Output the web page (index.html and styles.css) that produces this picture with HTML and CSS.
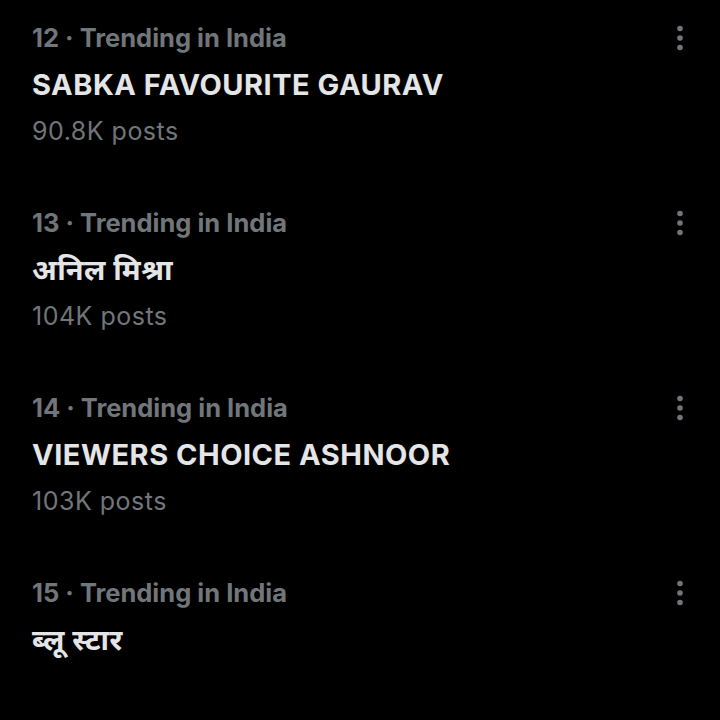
FILE: index.html
```html
<!DOCTYPE html>
<html lang="en">
<head>
<meta charset="utf-8">
<title>Trending</title>
<link rel="stylesheet" href="styles.css">
</head>
<body>
<div class="list">
  <div class="trend">
    <div class="meta">12 · Trending in India</div>
    <div class="title">SABKA FAVOURITE GAURAV</div>
    <div class="count">90.8K posts</div>
    <svg class="more" viewBox="0 0 12 30" width="12" height="30"><circle cx="6" cy="5.5" r="2.8"/><circle cx="6" cy="15" r="2.8"/><circle cx="6" cy="24.5" r="2.8"/></svg>
  </div>
  <div class="trend">
    <div class="meta">13 · Trending in India</div>
    <div class="title">अनिल मिश्रा</div>
    <div class="count">104K posts</div>
    <svg class="more" viewBox="0 0 12 30" width="12" height="30"><circle cx="6" cy="5.5" r="2.8"/><circle cx="6" cy="15" r="2.8"/><circle cx="6" cy="24.5" r="2.8"/></svg>
  </div>
  <div class="trend">
    <div class="meta">14 · Trending in India</div>
    <div class="title">VIEWERS CHOICE ASHNOOR</div>
    <div class="count">103K posts</div>
    <svg class="more" viewBox="0 0 12 30" width="12" height="30"><circle cx="6" cy="5.5" r="2.8"/><circle cx="6" cy="15" r="2.8"/><circle cx="6" cy="24.5" r="2.8"/></svg>
  </div>
  <div class="trend">
    <div class="meta">15 · Trending in India</div>
    <div class="title">ब्लू स्टार</div>
    <svg class="more" viewBox="0 0 12 30" width="12" height="30"><circle cx="6" cy="5.5" r="2.8"/><circle cx="6" cy="15" r="2.8"/><circle cx="6" cy="24.5" r="2.8"/></svg>
  </div>
</div>
</body>
</html>
```

FILE: styles.css
```css
html, body {
  margin: 0;
  padding: 0;
  background: #000;
  height: 720px;
  overflow: hidden;
}
body {
  font-family: Inter, "Noto Sans", "Noto Sans Devanagari", sans-serif;
}
.list {
  display: flex;
  flex-direction: column;
}
.trend {
  position: relative;
  padding: 15px 32px 32px 32px;
}
.meta {
  color: #71767b;
  font-weight: 700;
  font-size: 25.5px;
  line-height: 46px;
}
.title {
  color: #e3e5e6;
  font-weight: 700;
  font-size: 29px;
  letter-spacing: 0.5px;
  line-height: 48px;
}
.count {
  color: #71767b;
  font-weight: 400;
  font-size: 25px;
  letter-spacing: 0.5px;
  line-height: 44px;
}
.more {
  position: absolute;
  top: 23px;
  right: 34px;
  fill: #71767b;
}
```
